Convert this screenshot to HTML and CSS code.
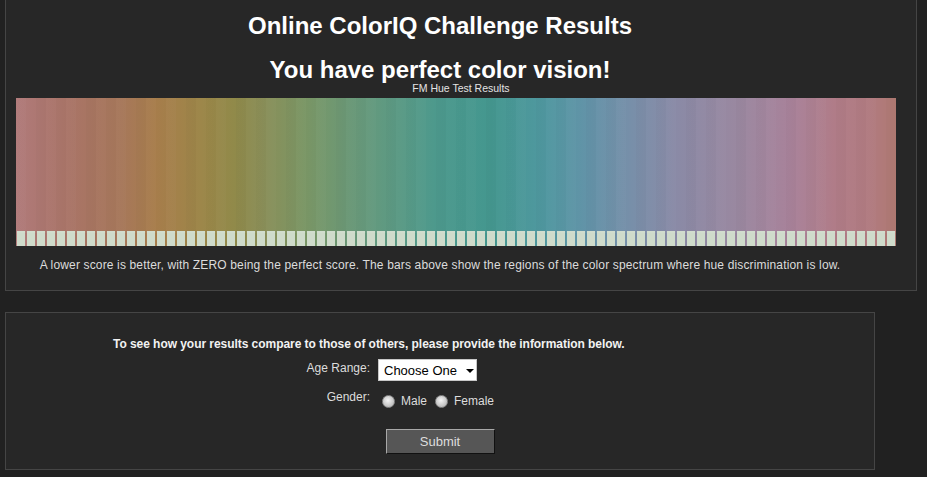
FILE: index.html
```html
<!DOCTYPE html>
<html>
<head>
<meta charset="utf-8">
<title>Online ColorIQ Challenge Results</title>
<link rel="stylesheet" href="styles.css">
</head>
<body>
<div class="panel results">
  <div class="heads">
    <h1 class="title">Online ColorIQ Challenge Results</h1>
    <h2 class="verdict">You have perfect color vision!</h2>
  </div>
  <div class="chart-label">FM Hue Test Results</div>
  <div class="chart">
    <div class="chart-bars"></div>
    <div class="chart-caps"></div>
  </div>
  <p class="note">A lower score is better, with ZERO being the perfect score. The bars above show the regions of the color spectrum where hue discrimination is low.</p>
</div>

<div class="panel survey">
  <form class="form">
    <div class="intro">To see how your results compare to those of others, please provide the information below.</div>
    <div class="row row-age">
      <label class="label" for="age">Age Range:</label>
      <span class="select-wrap">
        <select id="age" class="select">
          <option>Choose One</option>
          <option>Under 20</option>
          <option>20-29</option>
          <option>30-39</option>
          <option>40-49</option>
          <option>50-59</option>
          <option>60+</option>
        </select>
      </span>
    </div>
    <div class="row row-gender">
      <span class="label">Gender:</span>
      <span class="radios">
        <input type="radio" name="g" id="gm" class="radio"><label for="gm" class="radio-text">Male</label>
        <input type="radio" name="g" id="gf" class="radio radio-second"><label for="gf" class="radio-text">Female</label>
      </span>
    </div>
    <div class="actions">
      <button type="button" class="submit">Submit</button>
    </div>
  </form>
</div>
</body>
</html>
```

FILE: styles.css
```css
html, body {
  margin: 0;
  padding: 0;
}
body {
  background: #212121;
  font-family: "Liberation Sans", Arial, sans-serif;
  color: #dddddd;
}

.panel {
  background: #272727;
  border: 1px solid #454545;
  box-sizing: border-box;
  margin-left: 5px;
}

.results {
  width: 912px;
  border-top: 0;
  padding: 12px 0 18px 0;
}

.heads {
  width: 868px;
  text-align: center;
}
.title {
  margin: 0;
  font-size: 24px;
  line-height: 28px;
  font-weight: bold;
  color: #ffffff;
}
.verdict {
  margin: 18px 0 0 0;
  font-size: 24px;
  line-height: 24px;
  font-weight: bold;
  color: #ffffff;
}
.chart-label {
  text-align: center;
  font-size: 10.5px;
  line-height: 12px;
  color: #e4e4e4;
}

.chart {
  margin: 4px 0 0 10px;
  width: 880px;
  height: 148px;
  display: flex;
  flex-direction: column;
  background:
    repeating-linear-gradient(to right,
      rgba(255,255,255,0.02) 0 10px,
      rgba(0,0,0,0) 10px 20px,
      rgba(0,0,0,0.02) 20px 30px,
      rgba(255,255,255,0.012) 30px 40px,
      rgba(0,0,0,0.012) 40px 50px),
    linear-gradient(to right,
      #b07a7a 0%,
      #a97467 6%,
      #a6775a 12%,
      #a87e4c 16%,
      #9c8648 21%,
      #908a4a 25%,
      #8a8e58 28%,
      #7a9766 33%,
      #6a9877 38%,
      #5c9a84 43%,
      #4c998d 48%,
      #44978f 54%,
      #5098a0 60%,
      #6393a8 65%,
      #788fa9 70%,
      #8a8aa6 75%,
      #9a88a0 82%,
      #a8829a 88%,
      #b07c88 93%,
      #b07a80 97%,
      #b07a72 100%);
}
.chart-bars {
  flex: 1;
}
.chart-caps {
  height: 15px;
  background:
    linear-gradient(to bottom, rgba(255,255,255,0.05) 0 2px, rgba(255,255,255,0) 2px),
    repeating-linear-gradient(to right,
      rgba(0,0,0,0) 0 1px,
      #cfdbcb 1px 9px,
      rgba(0,0,0,0) 9px 10px);
}

.note {
  width: 868px;
  margin: 12px 0 0 0;
  text-align: center;
  font-size: 12px;
  line-height: 14px;
  letter-spacing: 0.15px;
  color: #dcdcdc;
}

.survey {
  width: 870px;
  margin-top: 21px;
  padding: 24px 0 15px 0;
}

.form {
  margin: 0;
}
.intro {
  margin-left: 107px;
  font-size: 12px;
  line-height: 14px;
  font-weight: bold;
  letter-spacing: -0.05px;
  color: #f2f2f2;
}
.row {
  display: flex;
  margin-left: 107px;
  column-gap: 8px;
}
.row-age {
  margin-top: 8px;
}
.row-gender {
  margin-top: 9px;
}
.label {
  width: 257px;
  text-align: right;
  font-size: 12px;
  line-height: 14px;
  color: #dddddd;
}
.row-age .label {
  padding-top: 2px;
}

.select-wrap {
  position: relative;
  display: inline-block;
  width: 99px;
  height: 22px;
}
.select {
  appearance: none;
  -webkit-appearance: none;
  width: 99px;
  height: 22px;
  margin: 0;
  padding: 0 0 0 5px;
  border: 1px solid #c8c8c8;
  border-radius: 0;
  background: #ffffff;
  color: #000000;
  font-family: "Liberation Sans", Arial, sans-serif;
  font-size: 13px;
}
.select-wrap::after {
  content: "";
  position: absolute;
  left: 88px;
  top: 10px;
  border-left: 4px solid transparent;
  border-right: 4px solid transparent;
  border-top: 4px solid #000000;
  pointer-events: none;
}

.radios {
  display: flex;
  align-items: center;
  padding-top: 4px;
  height: 14px;
}
.radio {
  appearance: none;
  -webkit-appearance: none;
  width: 13px;
  height: 13px;
  margin: 0 6px 0 4px;
  border-radius: 50%;
  border: 1px solid #8a8a8a;
  box-sizing: border-box;
  background: radial-gradient(circle at 45% 40%, #f4f4f4 0, #d2d2d2 45%, #a8a8a8 100%);
}
.radio-second {
  margin-left: 8px;
}
.radio-text {
  font-size: 12px;
  line-height: 14px;
  color: #dddddd;
}

.actions {
  display: flex;
  justify-content: center;
  margin-top: 21px;
}
.submit {
  width: 109px;
  height: 25px;
  margin: 0;
  padding: 0;
  background: #565656;
  border: 1px solid;
  border-color: #a8a8a8 #111111 #111111 #a8a8a8;
  color: #dddddd;
  font-family: "Liberation Sans", Arial, sans-serif;
  font-size: 13px;
}
```
